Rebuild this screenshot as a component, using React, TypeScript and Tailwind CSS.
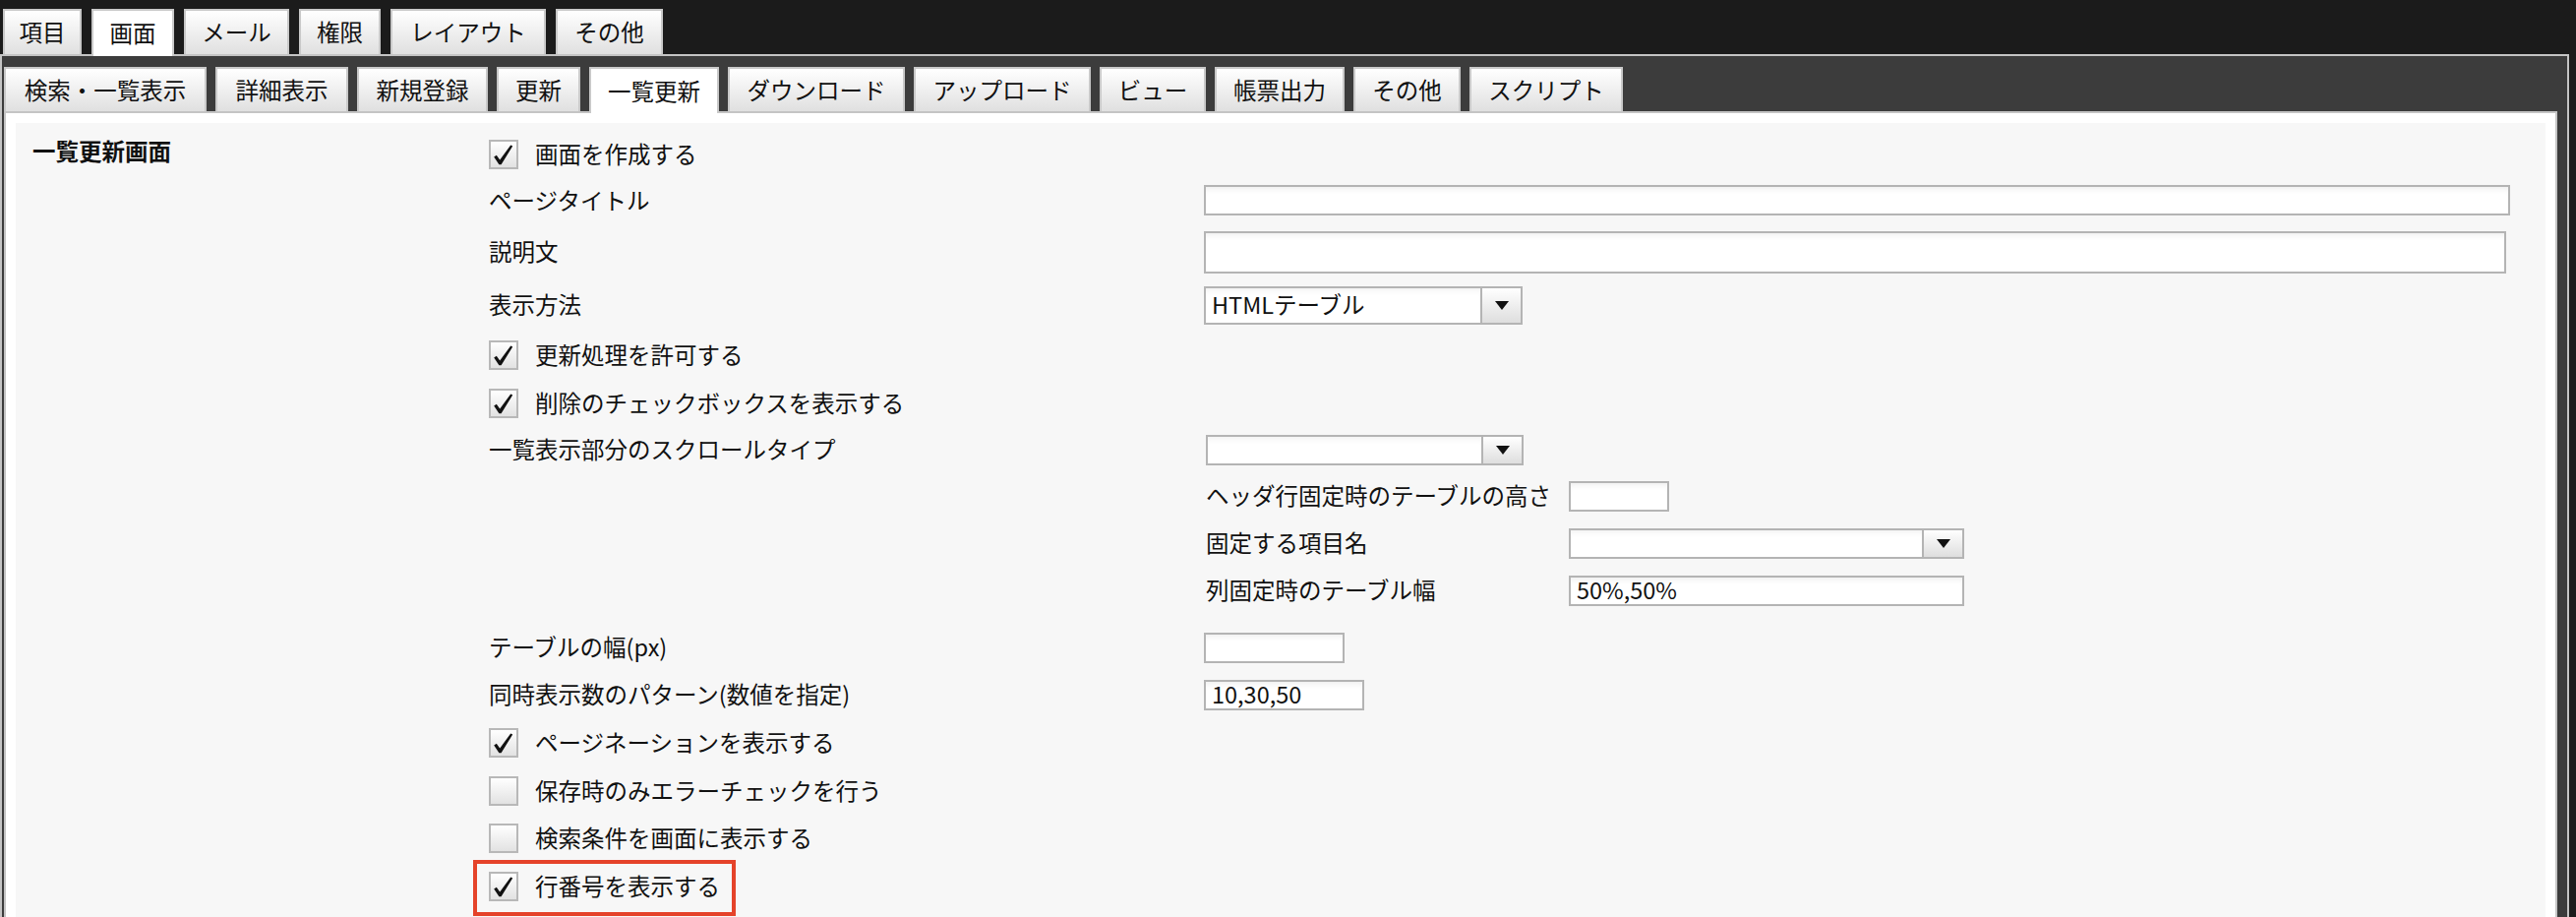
import type { ReactNode } from 'react';

const TOP_TABS = [
  { label: '項目', w: 'w-[80px]' },
  { label: '画面', w: 'w-[84px]', active: true },
  { label: 'メール', w: 'w-[107px]' },
  { label: '権限', w: 'w-[83px]' },
  { label: 'レイアウト', w: 'w-[158px]' },
  { label: 'その他', w: 'w-[109px]' },
];

const SUB_TABS = [
  { label: '検索・一覧表示', w: 'w-[206px]' },
  { label: '詳細表示', w: 'w-[135px]' },
  { label: '新規登録', w: 'w-[133px]' },
  { label: '更新', w: 'w-[85px]' },
  { label: '一覧更新', w: 'w-[132px]', active: true },
  { label: 'ダウンロード', w: 'w-[180px]' },
  { label: 'アップロード', w: 'w-[180px]' },
  { label: 'ビュー', w: 'w-[108px]' },
  { label: '帳票出力', w: 'w-[132px]' },
  { label: 'その他', w: 'w-[109px]' },
  { label: 'スクリプト', w: 'w-[156px]' },
];

const tabBase =
  'flex shrink-0 items-center justify-center border-2 border-b-0 border-[#c9c9c9] text-[23.5px] leading-none text-[#111]';

// h = normal height, ah = active height (overlaps the border below)
function Tab({ label, w, active, h, ah }: { label: string; w: string; active?: boolean; h: string; ah: string }) {
  return (
    <div
      className={
        active
          ? `${tabBase} ${w} ${ah} relative z-10 -mb-[2px] bg-white`
          : `${tabBase} ${w} ${h} bg-linear-to-b from-white to-[#e0e0e0]`
      }
    >
      {label}
    </div>
  );
}

function CheckBox({ checked }: { checked?: boolean }) {
  return (
    <div className="flex h-[30px] w-[30px] shrink-0 border-2 border-[#b8b8b8] bg-linear-to-b from-white to-[#e2e2e2]">
      {checked && (
        <svg viewBox="2 2 26 26" className="h-[26px] w-[26px]">
          <path d="M5.2 17.6 L7.8 15.8 L11.2 20.6 L22.2 5.4 L24.2 6.6 L12.6 25.2 L10.4 25.2 Z" fill="#111" />
        </svg>
      )}
    </div>
  );
}

function TextBox({ w, h = 'h-[31px]', value }: { w: string; h?: string; value?: string }) {
  return (
    <div
      className={`${w} ${h} flex shrink-0 items-center border-2 border-[#b4b4b4] bg-white pl-[6px] text-[23.5px] leading-none text-[#111] shadow-[inset_0_6px_6px_-4px_rgba(0,0,0,0.07)]`}
    >
      {value}
    </div>
  );
}

function SelectBox({ w, h = 'h-[31px]', value }: { w: string; h?: string; value?: string }) {
  return (
    <div
      className={`${w} ${h} flex shrink-0 border-2 border-[#b4b4b4] bg-white text-[23.5px] leading-none text-[#111]`}
    >
      <div className="flex flex-1 items-center pl-[6px] shadow-[inset_0_6px_6px_-4px_rgba(0,0,0,0.06)]">
        {value}
      </div>
      <div className="flex w-[41px] items-center justify-center border-l-2 border-[#b4b4b4] bg-linear-to-b from-white to-[#dedede]">
        <svg viewBox="0 0 14 9" className="h-[9px] w-[14px]">
          <polygon points="0,0 14,0 7,9" fill="#111" />
        </svg>
      </div>
    </div>
  );
}

function CheckRow({ label, checked, h, children }: { label: string; checked?: boolean; h: string; children?: ReactNode }) {
  return (
    <div className={`relative flex ${h} items-center gap-[17px]`}>
      <CheckBox checked={checked} />
      <span className="text-[23.5px] leading-none text-[#111]">{label}</span>
      {children}
    </div>
  );
}

function FieldRow({ label, h, children }: { label: string; h: string; children: ReactNode }) {
  return (
    <div className={`flex ${h} items-center`}>
      <div className="w-[727px] shrink-0 text-[23.5px] leading-none text-[#111]">{label}</div>
      {children}
    </div>
  );
}

function SubRow({ label, h, children }: { label: string; h: string; children: ReactNode }) {
  return (
    <div className={`flex ${h} items-center`}>
      <div className="w-[369px] shrink-0 whitespace-nowrap text-[23.5px] leading-none text-[#111]">{label}</div>
      {children}
    </div>
  );
}

export default function App() {
  return (
    <div className="h-[932px] w-[2619px] overflow-hidden bg-[#1b1b1b] font-['Noto_Sans_CJK_JP','Noto_Sans',sans-serif]">
      <div className="flex h-[55px] items-end gap-[10px] pl-[3px]">
        {TOP_TABS.map((t) => (
          <Tab key={t.label} label={t.label} w={t.w} active={t.active} h="h-[46px]" ah="h-[48px]" />
        ))}
      </div>

      <div className="w-[2612px] border-2 border-[#c4c4c4] bg-[#3c3c3c] pl-[2px] pr-[10px] pt-[11px]">
        <div className="flex h-[45px] items-end gap-[9px]">
          {SUB_TABS.map((t) => (
            <Tab key={t.label} label={t.label} w={t.w} active={t.active} h="h-[45px]" ah="h-[47px]" />
          ))}
        </div>

        <div className="h-[900px] border-2 border-[#c4c4c4] bg-white px-[10px] pt-[10px]">
          <div className="flex h-full bg-[#f7f7f7] pl-[17px] pt-[8px]">
            <div className="w-[464px] shrink-0 pt-[4px] text-[23.5px] font-bold leading-[32px] text-[#111]">
              一覧更新画面
            </div>

            <div className="flex flex-1 flex-col">
              <CheckRow label="画面を作成する" checked h="h-[47px]" />
              <FieldRow label="ページタイトル" h="h-[47px]">
                <TextBox w="w-[1328px]" />
              </FieldRow>
              <FieldRow label="説明文" h="h-[58px]">
                <TextBox w="w-[1324px]" h="h-[43px]" />
              </FieldRow>
              <FieldRow label="表示方法" h="h-[50px]">
                <SelectBox w="w-[324px]" h="h-[39px]" value="HTMLテーブル" />
              </FieldRow>
              <CheckRow label="更新処理を許可する" checked h="h-[52px]" />
              <CheckRow label="削除のチェックボックスを表示する" checked h="h-[46px]" />
              <FieldRow label="一覧表示部分のスクロールタイプ" h="h-[48px]">
                <div className="ml-[2px]">
                  <SelectBox w="w-[323px]" />
                </div>
              </FieldRow>

              <div className="flex flex-col pb-[11px] pl-[729px]">
                <SubRow label="ヘッダ行固定時のテーブルの高さ" h="h-[46px]">
                  <TextBox w="w-[102px]" />
                </SubRow>
                <SubRow label="固定する項目名" h="h-[50px]">
                  <SelectBox w="w-[402px]" />
                </SubRow>
                <SubRow label="列固定時のテーブル幅" h="h-[46px]">
                  <TextBox w="w-[402px]" value="50%,50%" />
                </SubRow>
              </div>

              <FieldRow label="テーブルの幅(px)" h="h-[48px]">
                <TextBox w="w-[143px]" />
              </FieldRow>
              <FieldRow label="同時表示数のパターン(数値を指定)" h="h-[48px]">
                <TextBox w="w-[163px]" value="10,30,50" />
              </FieldRow>
              <CheckRow label="ページネーションを表示する" checked h="h-[50px]" />
              <CheckRow label="保存時のみエラーチェックを行う" h="h-[47px]" />
              <CheckRow label="検索条件を画面に表示する" h="h-[50px]" />
              <CheckRow label="行番号を表示する" checked h="h-[47px]">
                <span className="pointer-events-none absolute -left-[16px] -top-[3px] h-[57px] w-[267px] border-4 border-[#e5432a]" />
              </CheckRow>
            </div>
          </div>
        </div>
      </div>
    </div>
  );
}
